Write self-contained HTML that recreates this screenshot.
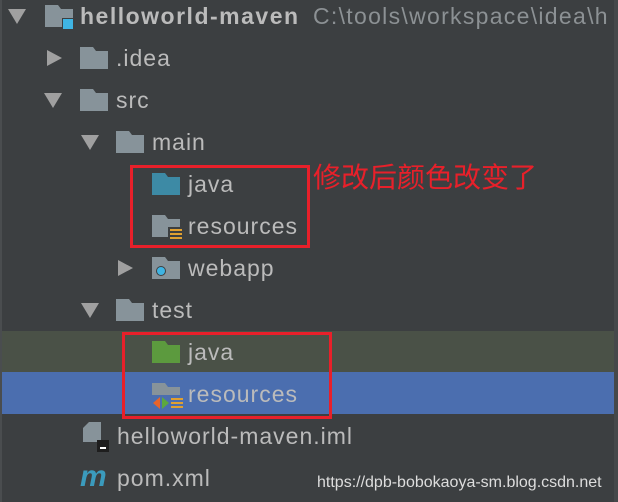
<!DOCTYPE html>
<html><head><meta charset="utf-8"><style>
body{margin:0;width:618px;height:502px;background:#3c3f41;position:relative;overflow:hidden;font-family:"Liberation Sans","Noto Sans CJK SC",sans-serif;}
.t{position:absolute;color:#bbbbbb;font-size:23px;line-height:30px;white-space:nowrap;letter-spacing:1px}
.ic{position:absolute}
.tri{position:absolute;width:0;height:0}
.dn{border-left:9px solid transparent;border-right:9px solid transparent;border-top:15px solid #a0a0a0}
.rt{border-top:8px solid transparent;border-bottom:8px solid transparent;border-left:15px solid #a0a0a0}
.box{position:absolute;border:3px solid #e8202a}
</style></head><body>
<div style="position:absolute;left:0;top:0;width:2px;height:502px;background:#4a4d4f"></div>
<div style="position:absolute;left:614px;top:0;width:4px;height:502px;background:#45484a"></div>
<div style="position:absolute;left:2px;top:331px;width:612px;height:41px;background:#4a5147"></div>
<div style="position:absolute;left:2px;top:372px;width:612px;height:42px;background:#4b6eaf"></div>

<svg width="0" height="0" style="position:absolute"><defs>
<path id="f" d="M0 0h13l3 4h12v18h-28z"/></defs></svg>

<div class="tri dn" style="left:8px;top:9px"></div>
<svg class="ic" style="left:45px;top:5px" width="30" height="26"><use href="#f" fill="#87939a"/><rect x="17" y="13" width="11" height="11" fill="#3c3f41"/><rect x="18" y="14" width="10" height="10" fill="#3fb4e3"/></svg>
<div class="t" style="left:80px;top:1px;font-weight:bold;letter-spacing:1.5px">helloworld-maven</div>
<div class="t" style="left:313px;top:1px;color:#8c9194;letter-spacing:1.3px">C:\tools\workspace\idea\h</div>

<div class="tri rt" style="left:47px;top:50px"></div>
<svg class="ic" style="left:80px;top:47px" width="28" height="22"><use href="#f" fill="#87939a"/></svg>
<div class="t" style="left:116px;top:43px">.idea</div>

<div class="tri dn" style="left:44px;top:93px"></div>
<svg class="ic" style="left:80px;top:89px" width="28" height="22"><use href="#f" fill="#87939a"/></svg>
<div class="t" style="left:116px;top:85px">src</div>

<div class="tri dn" style="left:81px;top:135px"></div>
<svg class="ic" style="left:116px;top:131px" width="28" height="22"><use href="#f" fill="#87939a"/></svg>
<div class="t" style="left:152px;top:127px">main</div>

<svg class="ic" style="left:152px;top:173px" width="28" height="22"><use href="#f" fill="#3d8aa5"/></svg>
<div class="t" style="left:188px;top:169px">java</div>

<svg class="ic" style="left:152px;top:215px" width="32" height="26"><use href="#f" fill="#87939a"/><rect x="16" y="12" width="16" height="14" fill="#3c3f41"/><g fill="#e0a030"><rect x="18" y="14" width="12" height="2"/><rect x="18" y="18" width="12" height="2"/><rect x="18" y="22" width="12" height="2"/></g></svg>
<div class="t" style="left:188px;top:211px">resources</div>

<div class="tri rt" style="left:118px;top:260px"></div>
<svg class="ic" style="left:152px;top:257px" width="28" height="22"><use href="#f" fill="#87939a"/><circle cx="9" cy="14" r="5" fill="#3c3f41"/><circle cx="9" cy="14" r="4" fill="#3fb4e3"/></svg>
<div class="t" style="left:188px;top:253px">webapp</div>

<div class="tri dn" style="left:81px;top:303px"></div>
<svg class="ic" style="left:116px;top:299px" width="28" height="22"><use href="#f" fill="#87939a"/></svg>
<div class="t" style="left:152px;top:295px">test</div>

<svg class="ic" style="left:152px;top:341px" width="28" height="22"><use href="#f" fill="#5c9a3e"/></svg>
<div class="t" style="left:188px;top:337px">java</div>

<svg class="ic" style="left:152px;top:383px" width="32" height="28"><use href="#f" fill="#87939a"/><rect x="0" y="12" width="32" height="16" fill="#4b6eaf"/><path d="M8 14l-7 6 7 6z" fill="#e8642a"/><path d="M10 14l7 6-7 6z" fill="#5ca83e"/><g fill="#e0a030"><rect x="19" y="15" width="12" height="2"/><rect x="19" y="19" width="12" height="2"/><rect x="19" y="23" width="12" height="2"/></g></svg>
<div class="t" style="left:188px;top:379px">resources</div>

<svg class="ic" style="left:83px;top:422px" width="28" height="30"><path d="M6 0h12v20h-18v-14z" fill="#87939a"/><rect x="14" y="18" width="12" height="12" fill="#1e1e1e"/><rect x="17" y="25" width="6" height="2" fill="#fff"/></svg>
<div class="t" style="left:117px;top:421px">helloworld-maven.iml</div>

<div class="t" style="left:80px;top:462px;color:#3b9bbd;font-weight:bold;font-style:italic;font-size:30px">m</div>
<div class="t" style="left:117px;top:463px">pom.xml</div>

<div class="box" style="left:130px;top:165px;width:174px;height:77px"></div>
<div class="box" style="left:122px;top:332px;width:204px;height:81px"></div>
<div class="t" style="left:313px;top:160px;color:#e8202a;font-size:28px;letter-spacing:0;font-family:'Noto Sans CJK SC',sans-serif;line-height:32px">修改后颜色改变了</div>
<div class="t" style="left:317px;top:473px;color:#dddddd;font-size:16px;letter-spacing:0;line-height:20px">https://dpb-bobokaoya-sm.blog.csdn.net</div>
</body></html>
